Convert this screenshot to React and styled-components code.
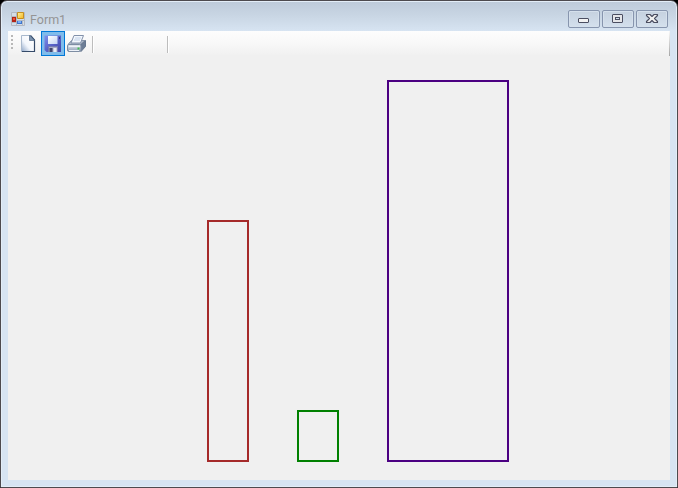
import React from "react";
import styled, { createGlobalStyle } from "styled-components";

const GlobalStyle = createGlobalStyle`
  body { margin: 0; background: #000; overflow: hidden; }
  *, *::before, *::after { box-sizing: border-box; }
`;

const Window = styled.main`
  display: flex;
  flex-direction: column;
  width: 678px;
  height: 488px;
  padding: 0 7px 7px;
  border: 1px solid #4d4a4e;
  border-radius: 7px 7px 0 0;
  background: linear-gradient(#bdcad9 0, #c9d6e4 15px, #d7e4f2 30px);
  box-shadow: inset 0 0 0 1px #e3edf7;
  font-family: Roboto, "Noto Sans", sans-serif;
`;

const TitleBar = styled.header`
  display: flex;
  align-items: flex-start;
  height: 30px;
  flex: none;
  padding: 9px 2px 0 2px;
`;

const Title = styled.h1`
  flex: 1;
  margin: 2px 0 0 4px;
  font: 400 12.5px/16px Roboto, "Noto Sans", sans-serif;
  color: #949494;
`;

const AppIcon = styled.svg`
  flex: none;
  width: 16px;
  height: 16px;
  margin-top: 1px;
`;

const Controls = styled.div`
  display: flex;
  gap: 2px;
`;

const ControlButton = styled.button`
  display: flex;
  width: 32px;
  height: 18px;
  padding: 0;
  border: 1px solid #8795ae;
  border-radius: 2px;
  background: linear-gradient(#c5d1df, #d4e0ed);
  box-shadow: inset 0 0 0 1px #d5e0ec;
`;

const ControlGlyph = styled.svg`
  width: 30px;
  height: 16px;
`;

const Client = styled.section`
  flex: 1;
  display: flex;
  flex-direction: column;
  background: #f0f0f0;
`;

const ToolBar = styled.nav`
  display: flex;
  flex: none;
  align-items: flex-start;
  height: 25px;
  padding: 0 0 0 3px;
  background: linear-gradient(#fdfdfd, #f8f8f8 50%, #f0f0f0);
`;

const Grip = styled.svg`
  width: 4px;
  height: 25px;
  margin-right: 2px;
`;

const ToolButton = styled.button`
  display: flex;
  align-items: center;
  justify-content: center;
  width: 24px;
  height: 25px;
  padding: 0;
  border: 1px solid ${(p) => (p.$active ? "#0078d7" : "transparent")};
  background: ${(p) => (p.$active ? "#80bceb" : "transparent")};
`;

const ToolIcon = styled.svg`
  flex: none;
  width: 20px;
  height: 20px;
`;

const Separator = styled.span`
  width: 2px;
  height: 17px;
  margin: 5px 0 0 ${(p) => p.$before}px;
  border-left: 1px solid #bdbdbd;
  border-right: 1px solid #fff;
`;

const ToolBarEnd = styled.span`
  width: 1px;
  height: 25px;
  margin-left: auto;
  background: linear-gradient(#f8f8f8, #a5a5a5);
`;

const Canvas = styled.div`
  flex: 1;
  display: flex;
  align-items: flex-end;
  gap: 48px;
  padding: 0 0 18px 199px;
`;

const Bar = styled.div`
  width: ${(p) => p.$width}px;
  height: ${(p) => p.$height}px;
  border: 2px solid ${(p) => p.$color};
`;

const bars = [
  { color: "brown", width: 42, height: 242 },
  { color: "green", width: 42, height: 52 },
  { color: "indigo", width: 122, height: 382 },
];

function FormIcon() {
  return (
    <AppIcon viewBox="0 0 16 16">
      <defs>
        <linearGradient id="gold" x2="1" y2="1">
          <stop stopColor="#fff3a0" />
          <stop offset="1" stopColor="#f3b51c" />
        </linearGradient>
      </defs>
      <path d="M1.500 1.500H14.500V14.500H1.500ZM6.500 2V14M2 5.500H6M7 9.500H14M2 11.500H6M12.500 10V14" fill="#d5dee7" stroke="#b3b9c2" />
      <path d="M7.500 1.500h6v6h-6z" fill="url(#gold)" stroke="#c68f20" />
      <path d="M2 6h4v5H2z" fill="#b32417" />
      <path d="M3 7h2v2H3z" fill="#ee5335" />
      <path d="M7 10h5v3H7z" fill="#3e76cd" />
      <path d="M8 10h3v2H8z" fill="#79aef7" />
    </AppIcon>
  );
}

function MinimizeGlyph() {
  return (
    <ControlGlyph viewBox="0 0 30 16">
      <rect x="9.500" y="7.500" width="10" height="4" rx=".5" fill="#f2f2f2" stroke="#4b4e61" />
    </ControlGlyph>
  );
}

function MaximizeGlyph() {
  return (
    <ControlGlyph viewBox="0 0 30 16">
      <rect x="9.500" y="3.500" width="10" height="8" rx=".5" fill="#e4e5e8" stroke="#4b4e61" />
      <rect x="12.500" y="6.500" width="4" height="2" fill="#d0dce9" stroke="#4b4e61" />
    </ControlGlyph>
  );
}

function CloseGlyph() {
  return (
    <ControlGlyph viewBox="0 0 30 16">
      <path
        d="M9.500 3.500H13L15 5.500L17 3.500H20.500V4.500L17.500 7.500L20.500 10.500V11.500H17L15 9.500L13 11.500H9.500V10.500L12.500 7.500L9.500 4.500Z"
        fill="#f0f0f0"
        stroke="#4b4e61"
        strokeWidth="1.15"
        strokeLinejoin="round"
      />
    </ControlGlyph>
  );
}

function NewIcon() {
  return (
    <ToolIcon viewBox="0 0 20 20">
      <defs>
        <linearGradient id="paper" x1="1" x2="0" y2="1">
          <stop offset=".2" stopColor="#fff" />
          <stop offset=".6" stopColor="#f2f6fc" />
          <stop offset="1" stopColor="#8fa6c7" />
        </linearGradient>
      </defs>
      <path d="M2.500 1.500H11.500L15.500 6V17.500H2.500Z" fill="url(#paper)" stroke="#a9b9cd" />
      <path d="M11.500 1.500L15.500 6V17.500H3" fill="none" stroke="#354a68" strokeWidth="1.2" />
      <path d="M10.500 1.500V6.500H15.500L11.500 2Z" fill="#7c93af" stroke="#4d6584" strokeWidth=".7" />
    </ToolIcon>
  );
}

function SaveIcon() {
  return (
    <ToolIcon viewBox="0 0 20 20">
      <defs>
        <linearGradient id="disk" x2="1" y2="1">
          <stop stopColor="#8092ec" />
          <stop offset=".5" stopColor="#5963c8" />
          <stop offset="1" stopColor="#4146a8" />
        </linearGradient>
        <linearGradient id="label" x2="1" y2="1">
          <stop stopColor="#fff" />
          <stop offset="1" stopColor="#c3d3f3" />
        </linearGradient>
      </defs>
      <path d="M1.500 1.500H18V18H3.500L1.500 16Z" fill="url(#disk)" />
      <path d="M5 2H14.500V10H5Z" fill="url(#label)" />
      <path d="M16 3h1v2h-1z" fill="#33387f" />
      <path d="M5 12H15V18H5Z" fill="#7479b5" />
      <path d="M6 13H14V18H6Z" fill="#a6aac6" />
      <path d="M6.500 14H9.500V18H6.500Z" fill="#41456c" />
      <path d="M10.500 14H13.500V18H10.500Z" fill="#e9ebf5" />
    </ToolIcon>
  );
}

function PrintIcon() {
  return (
    <ToolIcon viewBox="0 0 20 20">
      <defs>
        <linearGradient id="printer" x2="0" y2="1">
          <stop stopColor="#e9edf3" />
          <stop offset="1" stopColor="#8c9db4" />
        </linearGradient>
      </defs>
      <path d="M1 10.500L4.500 6.500H18L14 10.500Z" fill="#aeb9c9" stroke="#8593a8" />
      <path d="M14 10.500L18.500 6.500V12.500L14 17.500Z" fill="#6c7d96" stroke="#65768e" />
      <path d="M4 9L7 1.500H16.500L13.500 9Z" fill="#f3f7fd" stroke="#8291aa" />
      <path d="M8 4H14M7 6H13" stroke="#bfd0e7" />
      <rect x=".5" y="10.500" width="13.500" height="7" rx="1.500" fill="url(#printer)" stroke="#7e8da3" />
      <path d="M2 12.500H13M2 16.500H12" stroke="#eef2f8" />
      <path d="M10.500 13.500h2v2h-2z" fill="#42bd50" />
    </ToolIcon>
  );
}

export default function App() {
  return (
    <>
      <GlobalStyle />
      <Window>
        <TitleBar>
          <FormIcon />
          <Title>Form1</Title>
          <Controls>
            <ControlButton aria-label="Minimize"><MinimizeGlyph /></ControlButton>
            <ControlButton aria-label="Maximize"><MaximizeGlyph /></ControlButton>
            <ControlButton aria-label="Close"><CloseGlyph /></ControlButton>
          </Controls>
        </TitleBar>
        <Client>
          <ToolBar>
            <Grip viewBox="0 0 4 25">
              <path d="M0 4h2v2H0zM0 8h2v2H0zM0 12h2v2H0zM0 16h2v2H0z" fill="#b8b8b8" />
            </Grip>
            <ToolButton aria-label="New"><NewIcon /></ToolButton>
            <ToolButton aria-label="Save" $active><SaveIcon /></ToolButton>
            <ToolButton aria-label="Print"><PrintIcon /></ToolButton>
            <Separator $before={3} />
            <Separator $before={73} />
            <ToolBarEnd />
          </ToolBar>
          <Canvas>
            {bars.map((bar) => (
              <Bar key={bar.color} $color={bar.color} $width={bar.width} $height={bar.height} />
            ))}
          </Canvas>
        </Client>
      </Window>
    </>
  );
}
